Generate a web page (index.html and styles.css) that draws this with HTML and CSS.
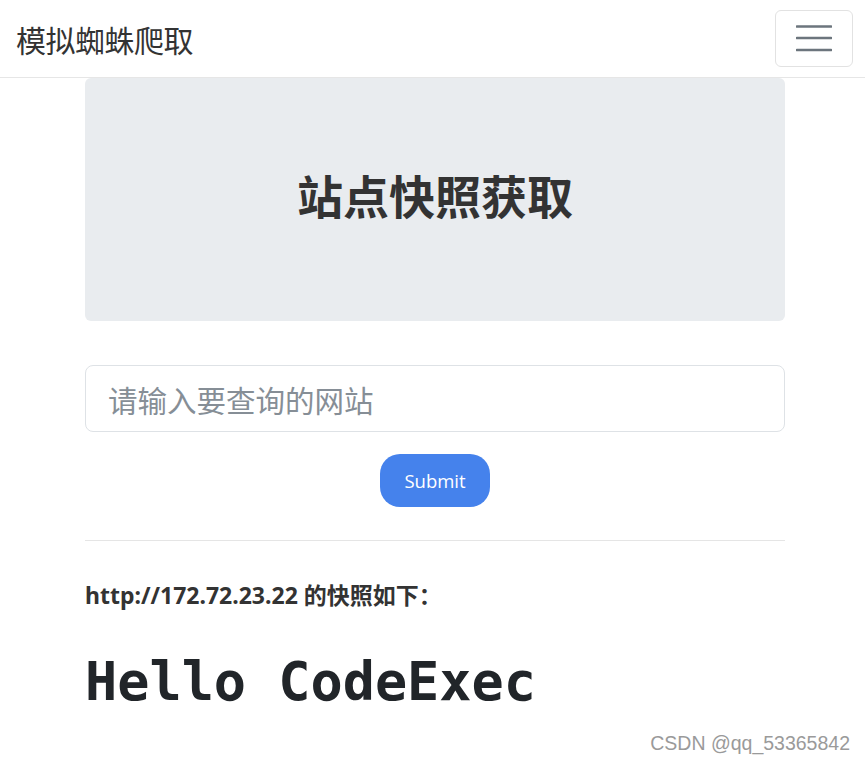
FILE: index.html
```html
<!DOCTYPE html>
<html lang="zh">
<head>
  <meta charset="UTF-8">
  <title>模拟蜘蛛爬取</title>
  <link rel="stylesheet" href="styles.css">
</head>
<body>
  <nav class="navbar">
    <span class="brand">模拟蜘蛛爬取</span>
    <button class="toggler" type="button">
      <svg width="36" height="28" viewBox="0 0 36 28">
        <path d="M1 2.5h34M1 14h34M1 26h34" stroke="#6c757d" stroke-width="2.6" stroke-linecap="round"/>
      </svg>
    </button>
  </nav>

  <div class="container">
    <div class="jumbotron">
      <h1>站点快照获取</h1>
    </div>

    <form class="search">
      <input type="text" placeholder="请输入要查询的网站">
      <button type="button" class="btn">Submit</button>
    </form>

    <hr>

    <p class="result-title">http://172.72.23.22 的快照如下：</p>
    <h1 class="snapshot">Hello CodeExec</h1>
  </div>

  <div class="watermark">CSDN @qq_53365842</div>
</body>
</html>
```

FILE: styles.css
```css
body {
  margin: 0;
  font-family: "Noto Sans", "Noto Sans CJK SC", sans-serif;
  color: #343a40;
  background: #fff;
  height: 764px;
  overflow: hidden;
}

.navbar {
  display: flex;
  justify-content: space-between;
  align-items: center;
  height: 77px;
  padding: 0 12px 0 16px;
  border-bottom: 1px solid #e6e6e6;
}

.brand {
  font-family: "Noto Sans CJK SC", sans-serif;
  font-size: 30px;
  color: #333;
  letter-spacing: -0.5px;
}

.toggler {
  width: 78px;
  height: 57px;
  margin-top: -1px;
  background: #fff;
  border: 1px solid #e2e2e2;
  border-radius: 6px;
  display: flex;
  align-items: center;
  justify-content: center;
  padding: 0;
}

.container {
  width: 700px;
  margin: 0 auto;
  padding-left: 5px;
}

.jumbotron {
  height: 243px;
  background: #e9ecef;
  border-radius: 6px;
  display: flex;
  align-items: center;
  justify-content: center;
}

.jumbotron h1 {
  margin: 0 0 12px;
  font-family: "Noto Sans CJK SC", sans-serif;
  font-weight: 700;
  font-size: 46px;
  color: #333;
}

.search {
  margin-top: 44px;
  display: flex;
  flex-direction: column;
  align-items: center;
}

.search input {
  box-sizing: border-box;
  width: 100%;
  height: 67px;
  padding: 0 22px;
  border: 1px solid #dee2e6;
  border-radius: 8px;
  font-family: "Noto Sans CJK SC", sans-serif;
  font-size: 29.5px;
  outline: none;
}

.search input::placeholder {
  color: #868e96;
}

.btn {
  margin-top: 22px;
  width: 110px;
  height: 53px;
  border: none;
  border-radius: 20px;
  background: #4582ec;
  color: #fff;
  font-family: "Open Sans", sans-serif;
  font-size: 18.5px;
  padding: 0;
}

hr {
  margin: 33px 0 0;
  border: none;
  border-top: 1px solid #e5e5e5;
}

.result-title {
  margin: 36px 0 0;
  font-family: "Noto Sans", "Noto Sans CJK SC", sans-serif;
  font-weight: 700;
  font-size: 23px;
  color: #333;
}

.snapshot {
  margin: 39px 0 0;
  font-family: "DejaVu Sans Mono", monospace;
  font-weight: 700;
  font-size: 53.5px;
  color: #212529;
}

.watermark {
  position: absolute;
  right: 15px;
  top: 732px;
  font-family: "Liberation Sans", sans-serif;
  font-size: 19.5px;
  color: #9a9a9a;
}
```
